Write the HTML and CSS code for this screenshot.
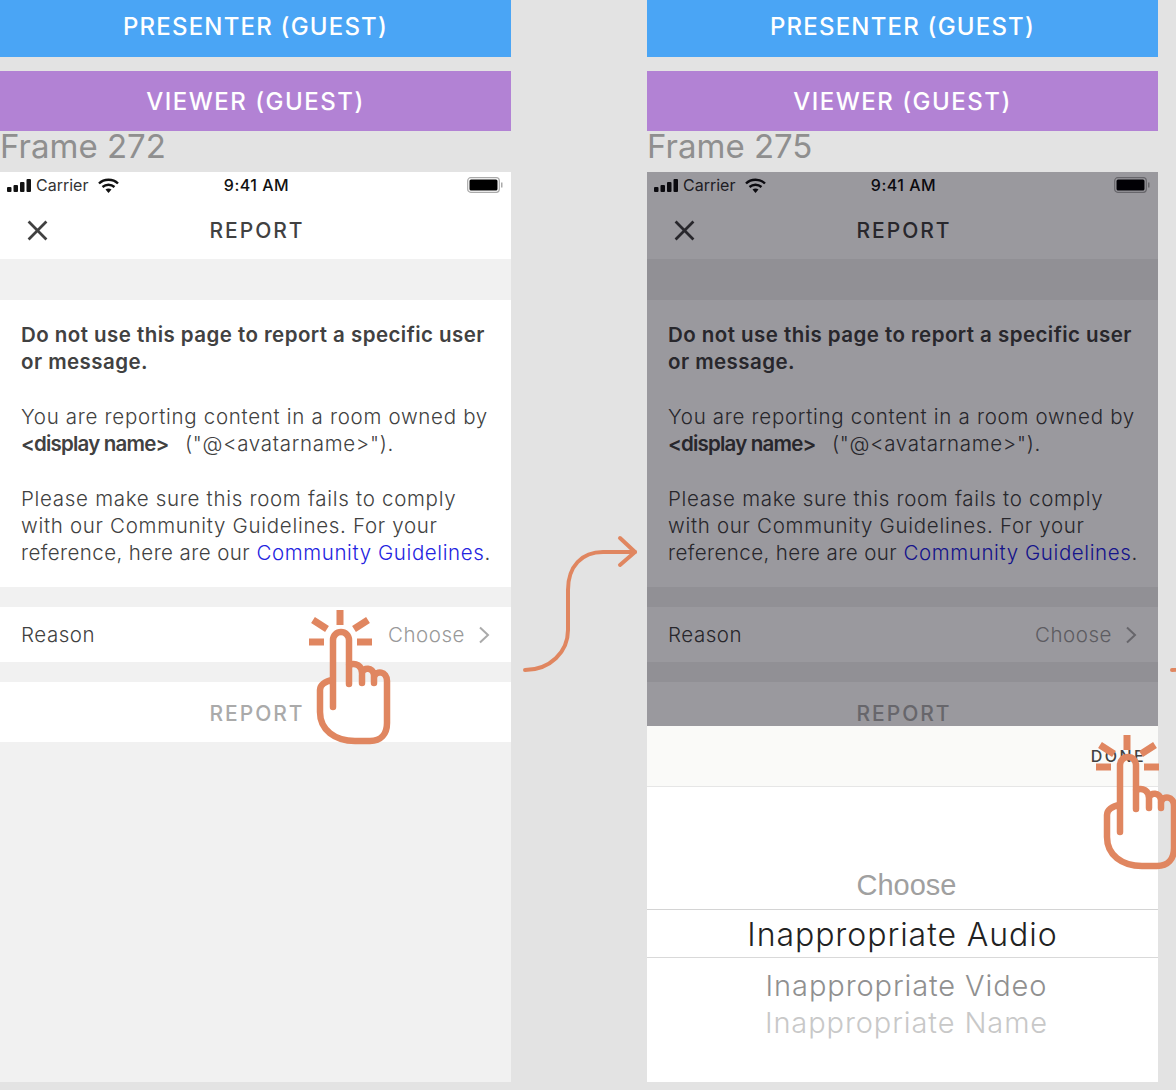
FILE: index.html
```html
<!DOCTYPE html>
<html lang="en">

<head>
  <meta charset="UTF-8" />
  <title>Report flow</title>
  <link rel="stylesheet" href="styles.css">
</head>

<body>
  <svg class="sprites" width="0" height="0">
    <symbol id="hand" viewBox="0 0 95 143">
      <g fill="none" stroke="#e08660" stroke-width="7">
        <path d="M40 5V20M13 15L27 24M68 15L54 24M9 37H24M57 37H72" />
        <path stroke-width="6.500" stroke-linecap="round" stroke-linejoin="round" d="M33 102V35A8 8 0 0 1 49 35V79M49 60C56 57 62 61 62 68V78M62 68C63 62 73 62 74 70V78M74 72C76 65 87 66 87 76V118C87 129 81 136 70 136H55C35 136 20 125 20 107V85C20 80 25 76 33 75" />
      </g>
    </symbol>
    <symbol id="arrow" viewBox="0 0 120 145">
      <g fill="none" stroke="#e08660" stroke-width="4" stroke-linecap="round" stroke-linejoin="round">
        <path d="M5 140C30 140 48 122 48 100V60C48 36 62 22 83 22H115" />
        <path d="M100 8L115 22L100 35" />
      </g>
    </symbol>
    <symbol id="bars" viewBox="0 0 24 13">
      <g fill="#111">
        <rect x="0" y="8" width="4.500" height="5" rx="1" />
        <rect x="6.500" y="6" width="4.500" height="7" rx="1" />
        <rect x="13" y="3" width="4.500" height="10" rx="1" />
        <rect x="19.500" y="0" width="4.500" height="13" rx="1" />
      </g>
    </symbol>
    <symbol id="wifi" viewBox="0 0 21 15">
      <g fill="none" stroke="#111" stroke-width="2.400">
        <path d="M1 5.500C6 0.500 15 0.500 20 5.500" />
        <path d="M4.500 9C8 6 13 6 16.500 9" />
      </g>
      <path d="M7.500 11.500C9.300 10.300 11.700 10.300 13.500 11.500L10.500 15Z" fill="#111" />
    </symbol>
    <symbol id="battery" viewBox="0 0 36 16">
      <rect x="0.700" y="0.700" width="31.600" height="14.600" rx="3" fill="none" stroke="#aaa" stroke-width="1.200" />
      <rect x="2.500" y="2.500" width="28" height="11" rx="1.500" fill="#000" />
      <rect x="34" y="5.500" width="1.500" height="5" fill="#aaa" />
    </symbol>
    <symbol id="close" viewBox="0 0 20 20">
      <path d="M1.500 1.500L18.500 18.500M18.500 1.500L1.500 18.500" fill="none" stroke="#414141" stroke-width="2.600" />
    </symbol>
    <symbol id="chevron" viewBox="0 0 12 18">
      <path d="M2 1.500L10 9L2 16.500" fill="none" stroke="#aaa" stroke-width="2" />
    </symbol>
  </svg>

  <div class="board">

    <section class="frame">
      <div class="banner banner-presenter">PRESENTER (GUEST)</div>
      <div class="banner banner-viewer">VIEWER (GUEST)</div>
      <div class="frame-label">Frame 272</div>
      <div class="phone">
        <div class="status-bar">
          <div class="status-left">
            <svg class="icon-bars"><use href="#bars" /></svg>
            <span>Carrier</span>
            <svg class="icon-wifi"><use href="#wifi" /></svg>
          </div>
          <div class="status-time">9:41 AM</div>
          <svg class="icon-battery"><use href="#battery" /></svg>
        </div>
        <div class="nav-bar">
          <svg class="icon-close"><use href="#close" /></svg>
          <div class="nav-title">REPORT</div>
        </div>
        <div class="card">
          <p><strong>Do not use this page to report a specific user<br>or message.</strong></p>
          <p>You are reporting content in a room owned by<br><strong class="name">&lt;display name&gt;</strong> ("@&lt;avatarname&gt;").</p>
          <p>Please make sure this room fails to comply<br>with our Community Guidelines. For your<br><span class="link-lead">reference, here are our</span> <a class="link" href="#">Community Guidelines</a>.</p>
        </div>
        <div class="reason-row">
          <span>Reason</span>
          <div class="reason-value">
            <span>Choose</span>
            <svg class="icon-chevron"><use href="#chevron" /></svg>
          </div>
        </div>
        <div class="report-row">REPORT</div>
      </div>
      <svg class="hand hand-reason"><use href="#hand" /></svg>
      <svg class="arrow"><use href="#arrow" /></svg>
    </section>

    <section class="frame">
      <div class="banner banner-presenter">PRESENTER (GUEST)</div>
      <div class="banner banner-viewer">VIEWER (GUEST)</div>
      <div class="frame-label">Frame 275</div>
      <div class="phone">
        <div class="status-bar">
          <div class="status-left">
            <svg class="icon-bars"><use href="#bars" /></svg>
            <span>Carrier</span>
            <svg class="icon-wifi"><use href="#wifi" /></svg>
          </div>
          <div class="status-time">9:41 AM</div>
          <svg class="icon-battery"><use href="#battery" /></svg>
        </div>
        <div class="nav-bar">
          <svg class="icon-close"><use href="#close" /></svg>
          <div class="nav-title">REPORT</div>
        </div>
        <div class="card">
          <p><strong>Do not use this page to report a specific user<br>or message.</strong></p>
          <p>You are reporting content in a room owned by<br><strong class="name">&lt;display name&gt;</strong> ("@&lt;avatarname&gt;").</p>
          <p>Please make sure this room fails to comply<br>with our Community Guidelines. For your<br><span class="link-lead">reference, here are our</span> <a class="link" href="#">Community Guidelines</a>.</p>
        </div>
        <div class="reason-row">
          <span>Reason</span>
          <div class="reason-value">
            <span>Choose</span>
            <svg class="icon-chevron"><use href="#chevron" /></svg>
          </div>
        </div>
        <div class="report-row">REPORT</div>

        <div class="scrim"></div>
        <div class="sheet">
          <div class="sheet-toolbar"><span class="done">DONE</span></div>
          <div class="picker">
            <div class="picker-choose">Choose</div>
            <div class="picker-selected">Inappropriate Audio</div>
            <div class="picker-next">Inappropriate Video</div>
            <div class="picker-last">Inappropriate Name</div>
          </div>
        </div>
      </div>
      <svg class="hand hand-done"><use href="#hand" /></svg>
      <svg class="arrow"><use href="#arrow" /></svg>
    </section>

  </div>
</body>

</html>
```

FILE: styles.css
```css
html,
body {
  margin: 0;
  height: 100%;
  overflow: hidden;
}

body {
  background: #e3e3e3;
  font-family: "Inter", "Liberation Sans", sans-serif;
  color: #414141;
}

.sprites {
  display: block;
}

.board {
  display: grid;
  grid-template-columns: 511px 511px;
  column-gap: 136px;
}

.frame {
  position: relative;
}

.banner {
  display: flex;
  align-items: center;
  justify-content: center;
  color: white;
  font-size: 24px;
  font-weight: 500;
  letter-spacing: 1.200px;
}

.banner-presenter {
  height: 53px;
  padding-bottom: 4px;
  margin-bottom: 14px;
  background: #4aa5f5;
}

.banner-viewer {
  height: 60px;
  background: #b282d4;
  letter-spacing: 1.500px;
}

.frame-label {
  height: 41px;
  line-height: 30px;
  font-size: 33px;
  color: #8f8f8f;
  white-space: nowrap;
}

.phone {
  position: relative;
  height: 910px;
  background: #f1f1f1;
  overflow: hidden;
}

.status-bar {
  position: relative;
  display: flex;
  align-items: center;
  justify-content: space-between;
  height: 26px;
  padding: 0 8px 4px 7px;
  background: white;
  color: #111;
  font-size: 16px;
}

.status-left {
  display: flex;
  align-items: center;
  gap: 5px;
  color: #333;
}

.status-time {
  position: absolute;
  left: 2px;
  right: 0;
  text-align: center;
  font-weight: 500;
  letter-spacing: 0.500px;
}

.icon-bars {
  width: 24px;
  height: 13px;
}

.icon-wifi {
  width: 21px;
  height: 15px;
  margin-left: 5px;
}

.icon-battery {
  width: 36px;
  height: 16px;
}

.nav-bar {
  position: relative;
  display: flex;
  align-items: center;
  justify-content: center;
  height: 57px;
  padding-left: 3px;
  background: white;
}

.icon-close {
  position: absolute;
  left: 27px;
  top: 18px;
  width: 21px;
  height: 21px;
}

.nav-title {
  font-size: 21px;
  font-weight: 500;
  letter-spacing: 2px;
}

.card {
  margin-top: 41px;
  height: 287px;
  box-sizing: border-box;
  padding: 21px 8px 0 21px;
  background: white;
  font-size: 20.500px;
  font-weight: 300;
  letter-spacing: 0.700px;
  line-height: 27.300px;
}

.card p {
  margin: 0 0 27.300px;
}

.card strong {
  font-weight: 600;
  letter-spacing: 0.450px;
}

.card .name {
  padding-right: 10px;
  letter-spacing: -0.800px;
}

.link-lead {
  letter-spacing: 0.420px;
}

.link {
  color: #2323e0;
  text-decoration: none;
  letter-spacing: 0.600px;
}

.reason-row {
  display: flex;
  align-items: center;
  justify-content: space-between;
  height: 55px;
  margin-top: 20px;
  padding: 0 21px;
  background: white;
  font-size: 20.500px;
  font-weight: 300;
  letter-spacing: 0.550px;
}

.reason-value {
  display: flex;
  align-items: center;
  gap: 13px;
  color: #999;
}

.icon-chevron {
  width: 12px;
  height: 18px;
}

.report-row {
  display: flex;
  align-items: center;
  justify-content: center;
  height: 57px;
  padding: 3px 0 0 3px;
  margin-top: 20px;
  background: white;
  color: #aaa;
  font-size: 21px;
  font-weight: 500;
  letter-spacing: 2px;
}

/* dimmed layer and bottom picker of the second frame */
.scrim {
  position: absolute;
  left: 0;
  right: 0;
  top: 0;
  height: 554px;
  background: rgba(3, 0, 13, 0.4);
}

.sheet {
  position: absolute;
  left: 0;
  right: 0;
  top: 554px;
  bottom: 0;
  background: white;
}

.sheet-toolbar {
  display: flex;
  align-items: center;
  justify-content: flex-end;
  height: 61px;
  padding-right: 12px;
  background: #fafaf8;
  border-bottom: 1px solid #e6e6e6;
  box-sizing: border-box;
}

.done {
  font-size: 16px;
  font-weight: 500;
  letter-spacing: 2.400px;
}

.picker {
  display: flex;
  flex-direction: column;
  align-items: center;
  padding-top: 79px;
}

.picker-choose {
  width: 100%;
  height: 44px;
  padding-left: 8px;
  box-sizing: border-box;
  text-align: center;
  font-size: 29px;
  line-height: 38px;
  color: #a0a0a0;
  font-family: "Liberation Sans", sans-serif;
  border-bottom: 1px solid #d4d4d4;
}

.picker-selected {
  width: 100%;
  height: 48px;
  box-sizing: border-box;
  text-align: center;
  font-size: 32px;
  font-weight: 300;
  letter-spacing: 0.950px;
  line-height: 50px;
  color: #222;
  border-bottom: 1px solid #d9d9d9;
}

.picker-next {
  margin-top: 9px;
  padding-left: 8px;
  font-size: 29px;
  font-weight: 300;
  letter-spacing: 0.900px;
  line-height: 38px;
  color: #909090;
}

.picker-last {
  padding-left: 8px;
  font-size: 29px;
  font-weight: 300;
  letter-spacing: 0.900px;
  line-height: 36px;
  color: #c8c8c8;
}

/* annotations on top of the frames */
.hand {
  position: absolute;
  width: 95px;
  height: 143px;
}

.hand-reason {
  left: 300px;
  top: 605px;
}

.hand-done {
  left: 440px;
  top: 730px;
}

.arrow {
  position: absolute;
  left: 520px;
  top: 530px;
  width: 120px;
  height: 145px;
}
```
